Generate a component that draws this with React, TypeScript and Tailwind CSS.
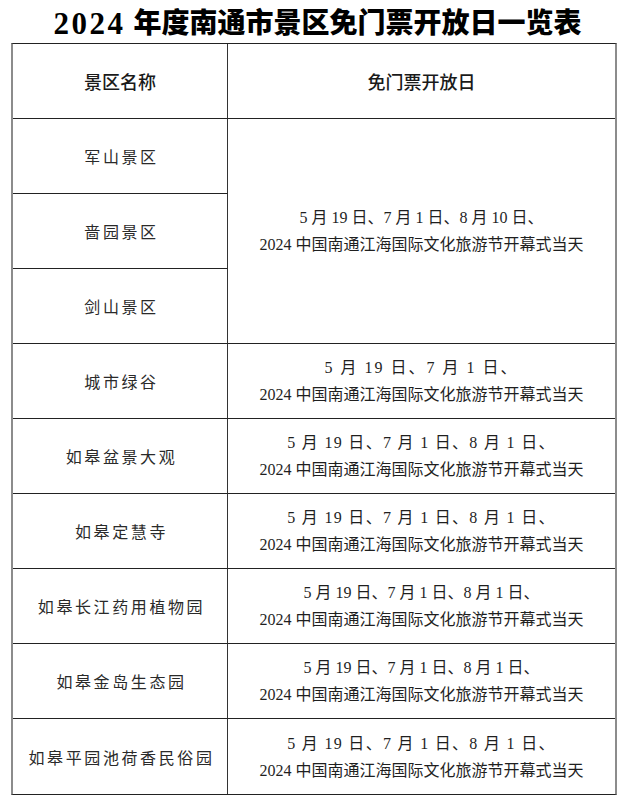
type Row = { name: string; line1: string; track: string };

const FESTIVAL = '2024 中国南通江海国际文化旅游节开幕式当天';

const rows: Row[] = [
    { name: '城市绿谷', line1: '5 月 19 日、7 月 1 日、', track: 'tracking-[2px]' },
    { name: '如皋盆景大观', line1: '5 月 19 日、7 月 1 日、8 月 1 日、', track: 'tracking-[1.3px]' },
    { name: '如皋定慧寺', line1: '5 月 19 日、7 月 1 日、8 月 1 日、', track: 'tracking-[1.3px]' },
    { name: '如皋长江药用植物园', line1: '5 月 19 日、7 月 1 日、8 月 1 日、', track: 'tracking-normal' },
    { name: '如皋金岛生态园', line1: '5 月 19 日、7 月 1 日、8 月 1 日、', track: 'tracking-normal' },
    { name: '如皋平园池荷香民俗园', line1: '5 月 19 日、7 月 1 日、8 月 1 日、', track: 'tracking-[1.3px]' },
];

function NameCell({ name, last }: { name: string; last?: boolean }) {
    return (
        <div
            className={`flex items-center justify-center border-r border-r-[#333] pl-[3px] font-['Noto_Sans_CJK_SC',sans-serif] text-[16px] tracking-[2.6px] text-[#2a2a2a] ${last ? '' : 'border-b border-b-[#222]'}`}
        >
            {name}
        </div>
    );
}

function DateCell({ line1, track, last }: { line1: string; track: string; last?: boolean }) {
    return (
        <div
            className={`flex flex-col items-center justify-center font-['Liberation_Serif','Noto_Sans_CJK_SC',serif] text-[16px] leading-[27px] text-[#1f1f1f] ${last ? '' : 'border-b border-b-[#222]'}`}
        >
            <p className={track}>{line1}</p>
            <p>{FESTIVAL}</p>
        </div>
    );
}

export default function App() {
    return (
        <div className="min-h-screen w-[635px] bg-white">
            <h1 className="flex h-[43px] items-center justify-center pt-[5px] font-['Liberation_Serif','Noto_Sans_CJK_SC',serif] text-[28px] font-black text-black">
                <span className="mr-[8px] text-[31px] font-bold tracking-[2.5px]">2024</span>
                年度南通市景区免门票开放日一览表
            </h1>

            <div className="ml-[11px] grid w-[606px] grid-cols-[215px_1fr] auto-rows-[75px] border-x-2 border-y border-x-[#8c8c8c] border-y-[#222]">
                <div className="flex items-center justify-center border-r border-b border-r-[#333] border-b-[#222] font-['Noto_Sans_CJK_SC',sans-serif] text-[18px] font-medium text-[#1a1a1a]">
                    景区名称
                </div>
                <div className="flex items-center justify-center border-b border-b-[#222] font-['Noto_Sans_CJK_SC',sans-serif] text-[18px] font-medium text-[#1a1a1a]">
                    免门票开放日
                </div>

                <NameCell name="军山景区" />
                <div className="row-span-3 flex flex-col items-center justify-center border-b border-b-[#222] font-['Liberation_Serif','Noto_Sans_CJK_SC',serif] text-[16px] leading-[27px] text-[#1f1f1f]">
                    <p>5 月 19 日、7 月 1 日、8 月 10 日、</p>
                    <p>{FESTIVAL}</p>
                </div>
                <NameCell name="啬园景区" />
                <NameCell name="剑山景区" />

                {rows.map((r, i) => {
                    const last = i === rows.length - 1;
                    return [
                        <NameCell key={r.name} name={r.name} last={last} />,
                        <DateCell key={r.name + '-d'} line1={r.line1} track={r.track} last={last} />,
                    ];
                })}
            </div>
        </div>
    );
}
